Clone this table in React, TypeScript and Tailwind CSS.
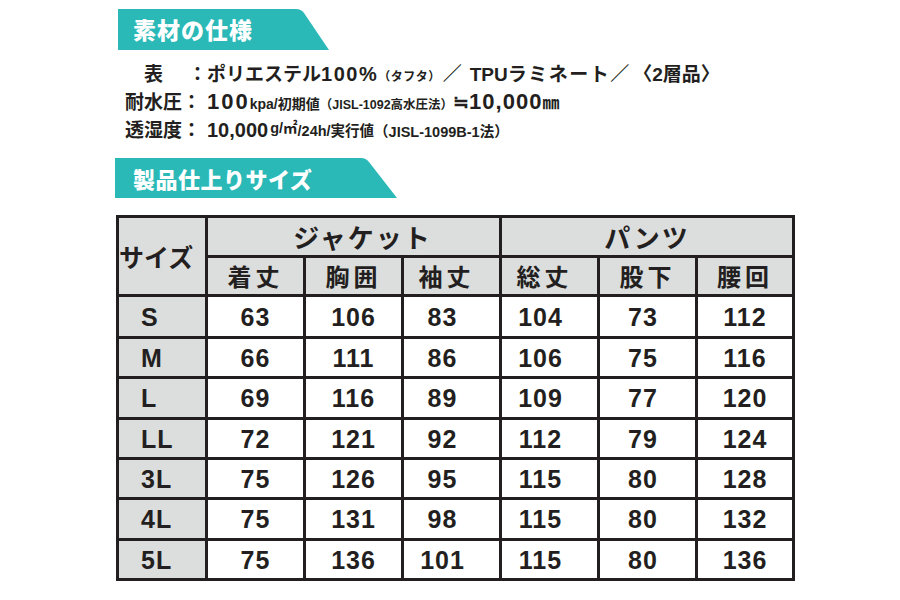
import React from 'react';

const font = "font-['Liberation_Sans','Noto_Sans_CJK_JP',sans-serif]";

const Banner: React.FC<{ text: string; boxClass: string; slantW: number; h: number; textClass: string }> = ({ text, boxClass, slantW, h, textClass }) => (
    <div className="flex">
        <div className={`bg-[#2bb9b8] flex items-center text-white font-black font-['Noto_Sans_CJK_JP',sans-serif] ${boxClass} ${textClass}`}>
            {text}
        </div>
        <svg width={slantW} height={h} viewBox={`0 0 ${slantW} ${h}`} className="block">
            <path d={`M0 0 H4 Q9 0 12 4 L${slantW} ${h} H0 Z`} fill="#2bb9b8" />
        </svg>
    </div>
);

const sizes = [
    ['S', 63, 106, 83, 104, 73, 112],
    ['M', 66, 111, 86, 106, 75, 116],
    ['L', 69, 116, 89, 109, 77, 120],
    ['LL', 72, 121, 92, 112, 79, 124],
    ['3L', 75, 126, 95, 115, 80, 128],
    ['4L', 75, 131, 98, 115, 80, 132],
    ['5L', 75, 136, 101, 115, 80, 136],
];

// per-column nudges so the numbers sit where the print has them
const colPad = ['', '', '', 'pr-[18px]', 'pr-[18px]', 'pr-[9px]', ''];

const SizeTable: React.FC = () => (
    <div className="grid grid-cols-[86px_95px_95px_95px_95px_95px_94px] grid-rows-[37px_36px_39px_37px_38px_37px_37px_38px_37px] gap-[3px] p-[3px] bg-[#231f20] w-[679px] text-[#231f20]">
        <div className="row-span-2 bg-[#dcdddd] flex items-center text-[25px] font-bold font-['Noto_Sans_CJK_JP',sans-serif] leading-none">サイズ</div>
        <div className="col-span-3 bg-[#dcdddd] flex items-center justify-center text-[26px] font-bold font-['Noto_Sans_CJK_JP',sans-serif] tracking-[2px] leading-none pl-[18px]">ジャケット</div>
        <div className="col-span-3 bg-[#dcdddd] flex items-center justify-center text-[26px] font-bold font-['Noto_Sans_CJK_JP',sans-serif] tracking-[2px] leading-none">パンツ</div>
        {['着丈', '胸囲', '袖丈', '総丈', '股下', '腰回'].map((h, i) => (
            <div key={h} className={`bg-[#dcdddd] flex items-center justify-center text-[24px] font-bold font-['Noto_Sans_CJK_JP',sans-serif] tracking-[4px] leading-none ${i === 2 || i === 3 ? 'pr-[10px]' : ''}`}>
                {h}
            </div>
        ))}
        {sizes.map(row => row.map((v, i) => (
            i === 0 ? (
                <div key={`${row[0]}-${i}`} className={`bg-[#dcdddd] flex items-center pl-[22px] pt-[2px] text-[25px] font-bold tracking-[1px] ${font}`}>{v}</div>
            ) : (
                <div key={`${row[0]}-${i}`} className={`bg-white flex items-center justify-center pt-[2px] text-[25px] font-bold tracking-[1px] ${font} ${colPad[i]}`}>{v}</div>
            )
        )))}
    </div>
);

export default function App() {
    return (
        <div className={`w-[900px] h-[600px] bg-white overflow-hidden text-[#231f20] font-bold ${font}`}>
            <div className="pt-[9px] pl-[118px]">
                <Banner text="素材の仕様" boxClass="w-[174px] h-[41px] pl-[15px]" textClass="text-[23px] tracking-[1px]" slantW={37} h={41} />
            </div>

            <div className="mt-[10px] pl-[125px] flex flex-col">
                <div className="flex items-baseline h-[28px] leading-[28px] whitespace-nowrap">
                    <span className="w-[57px] text-center text-[19px]">表</span>
                    <span className="w-[25px] pl-[6px] text-[19px]">：</span>
                    <span className="text-[19px]">ポリエステル</span>
                    <span className="text-[20px] tracking-[1.5px]">100%</span>
                    <span className="text-[12px] tracking-[0.5px]">（タフタ）</span>
                    <span className="text-[19px] pl-[2px]">／</span>
                    <span className="text-[19px] pl-[8px]">TPU</span>
                    <span className="text-[19px] tracking-[1.5px]">ラミネート</span>
                    <span className="text-[19px]">／</span>
                    <span className="text-[19px] pl-[4px]">〈2層品〉</span>
                </div>
                <div className="flex items-baseline h-[28px] leading-[28px] whitespace-nowrap">
                    <span className="w-[57px] text-[19px]">耐水圧</span>
                    <span className="w-[25px] text-[19px]">：</span>
                    <span className="text-[22px] tracking-[2px]">100</span>
                    <span className="text-[14px]">kpa/初期値</span>
                    <span className="text-[12.5px]">（JISL-1092高水圧法）</span>
                    <span className="text-[19px]">≒</span>
                    <span className="text-[22px] tracking-[1px]">10,000</span>
                    <span className="text-[17px]">㎜</span>
                </div>
                <div className="flex items-baseline h-[28px] leading-[28px] whitespace-nowrap">
                    <span className="w-[57px] text-[19px]">透湿度</span>
                    <span className="w-[25px] text-[19px]">：</span>
                    <span className="text-[20px]">10,000</span>
                    <span className="text-[14.5px] relative -top-[4px] pl-[2px]">g/㎡</span>
                    <span className="text-[14.5px] relative -top-[1px]">/24h/実行値</span>
                    <span className="text-[14.5px]">（JISL-1099B-1法）</span>
                </div>
            </div>

            <div className="mt-[14px] pl-[115px]">
                <Banner text="製品仕上りサイズ" boxClass="w-[242px] h-[40px] pl-[18px]" textClass="text-[22px] tracking-[0.5px]" slantW={40} h={40} />
            </div>

            <div className="mt-[17px] pl-[116px]">
                <SizeTable />
            </div>
        </div>
    );
}
